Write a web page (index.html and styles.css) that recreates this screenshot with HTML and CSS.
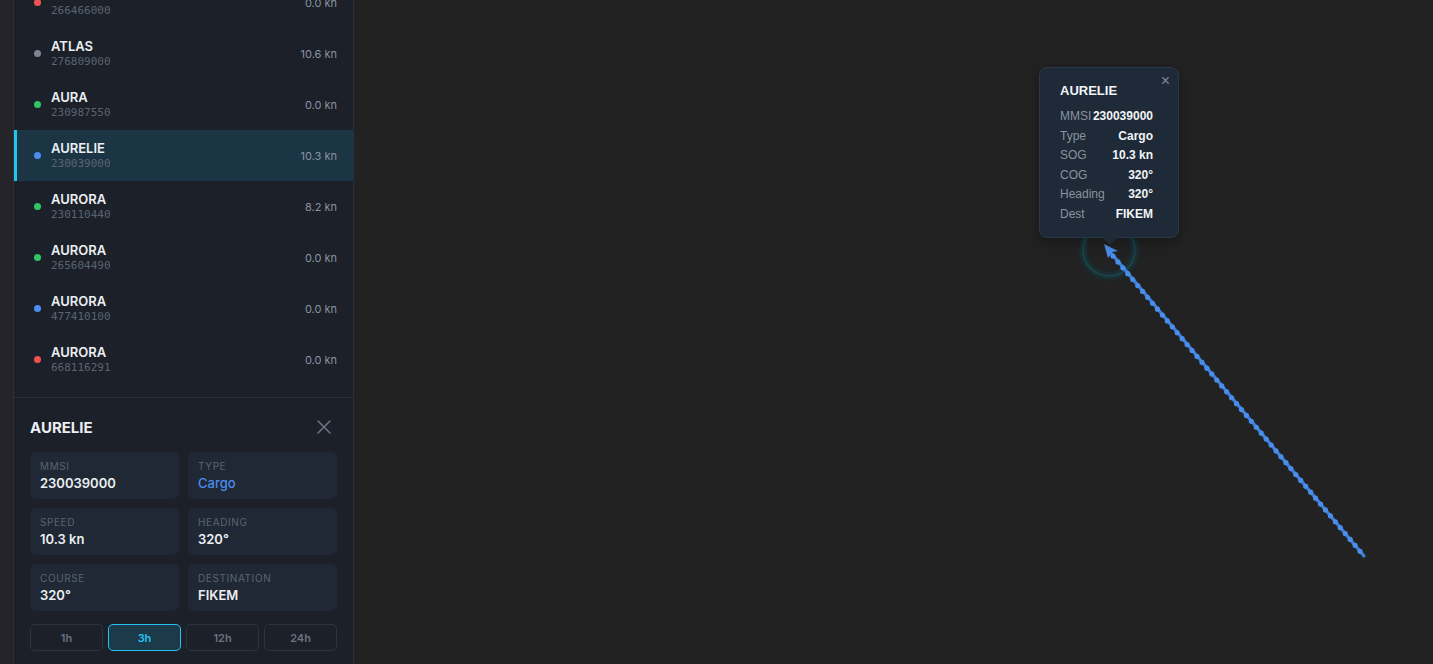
FILE: index.html
```html
<!DOCTYPE html>
<html lang="en">
<head>
  <meta charset="UTF-8">
  <title>Vessel tracker</title>
  <link rel="stylesheet" href="styles.css">
</head>
<body>
  <div class="app">
    <div class="rail"></div>

    <aside class="sidebar">
      <div class="vessel-list">
        <ul class="rows">
          <li class="row">
            <span class="dot red"></span>
            <div class="info"><div class="name">ATHENA</div><div class="mmsi">266466000</div></div>
            <span class="speed">0.0 kn</span>
          </li>
          <li class="row">
            <span class="dot grey"></span>
            <div class="info"><div class="name">ATLAS</div><div class="mmsi">276809000</div></div>
            <span class="speed">10.6 kn</span>
          </li>
          <li class="row">
            <span class="dot green"></span>
            <div class="info"><div class="name">AURA</div><div class="mmsi">230987550</div></div>
            <span class="speed">0.0 kn</span>
          </li>
          <li class="row selected">
            <span class="dot blue"></span>
            <div class="info"><div class="name">AURELIE</div><div class="mmsi">230039000</div></div>
            <span class="speed">10.3 kn</span>
          </li>
          <li class="row">
            <span class="dot green"></span>
            <div class="info"><div class="name">AURORA</div><div class="mmsi">230110440</div></div>
            <span class="speed">8.2 kn</span>
          </li>
          <li class="row">
            <span class="dot green"></span>
            <div class="info"><div class="name">AURORA</div><div class="mmsi">265604490</div></div>
            <span class="speed">0.0 kn</span>
          </li>
          <li class="row">
            <span class="dot blue"></span>
            <div class="info"><div class="name">AURORA</div><div class="mmsi">477410100</div></div>
            <span class="speed">0.0 kn</span>
          </li>
          <li class="row">
            <span class="dot red"></span>
            <div class="info"><div class="name">AURORA</div><div class="mmsi">668116291</div></div>
            <span class="speed">0.0 kn</span>
          </li>
        </ul>
      </div>

      <section class="detail">
        <div class="detail-head">
          <h3>AURELIE</h3>
          <button class="close" aria-label="Close">
            <svg width="14" height="14" viewBox="0 0 14 14"><path d="M1 1L13 13M13 1L1 13" stroke="currentColor" stroke-width="1.6" stroke-linecap="round"/></svg>
          </button>
        </div>
        <div class="cards">
          <div class="card"><div class="label">MMSI</div><div class="value">230039000</div></div>
          <div class="card"><div class="label">Type</div><div class="value type">Cargo</div></div>
          <div class="card"><div class="label">Speed</div><div class="value">10.3 kn</div></div>
          <div class="card"><div class="label">Heading</div><div class="value">320°</div></div>
          <div class="card"><div class="label">Course</div><div class="value">320°</div></div>
          <div class="card"><div class="label">Destination</div><div class="value">FIKEM</div></div>
        </div>
        <div class="ranges">
          <button>1h</button>
          <button class="active">3h</button>
          <button>12h</button>
          <button>24h</button>
        </div>
      </section>
    </aside>

    <main class="map">
      <svg class="layer" width="1079" height="664" viewBox="0 0 1079 664">
        <defs>
          <filter id="glow" x="-50%" y="-50%" width="200%" height="200%">
            <feGaussianBlur stdDeviation="2.5"/>
          </filter>
        </defs>
        <circle cx="755" cy="250" r="26" fill="none" stroke="#123c44" stroke-width="4" filter="url(#glow)"/>
        <circle cx="755" cy="250" r="26" fill="none" stroke="#17474f" stroke-width="1.5"/>
        <line x1="757" y1="253" x2="1010" y2="556" stroke="#3b7fdd" stroke-width="3.2" stroke-linecap="round"/>
        <line x1="759" y1="256" x2="1010" y2="556" stroke="#4b8eea" stroke-width="5.2" stroke-linecap="round" stroke-dasharray="0 7.7"/>
        <polygon points="750,244 764,251 758.5,252 754,258" fill="#4a8ee8"/>
      </svg>

      <div class="popup">
        <span class="popup-close">×</span>
        <h4>AURELIE</h4>
        <div class="prow"><span>MMSI</span><b>230039000</b></div>
        <div class="prow"><span>Type</span><b>Cargo</b></div>
        <div class="prow"><span>SOG</span><b>10.3 kn</b></div>
        <div class="prow"><span>COG</span><b>320°</b></div>
        <div class="prow"><span>Heading</span><b>320°</b></div>
        <div class="prow"><span>Dest</span><b>FIKEM</b></div>
      </div>
    </main>
  </div>
</body>
</html>
```

FILE: styles.css
```css
* {
  box-sizing: border-box;
}

body {
  margin: 0;
  background: #222222;
  font-family: Inter, "Noto Sans", sans-serif;
  color: #e6e9ed;
  overflow: hidden;
}

.app {
  display: flex;
  height: 664px;
}

.rail {
  width: 14px;
  background: #252429;
  border-right: 1px solid #2d3036;
}

.sidebar {
  width: 340px;
  background: #1b2029;
  border-right: 1px solid #2a3039;
  display: flex;
  flex-direction: column;
}

.vessel-list {
  height: 398px;
  overflow: hidden;
  border-bottom: 1px solid #2a3039;
}

.rows {
  list-style: none;
  margin: -23px 0 0;
  padding: 0;
}

.row {
  display: flex;
  align-items: center;
  height: 51px;
  padding: 0 16px 0 20px;
  border-left: 3px solid transparent;
}

.row.selected {
  background: #1b3545;
  border-left-color: #22c4f0;
}

.dot {
  width: 7px;
  height: 7px;
  border-radius: 50%;
  margin-left: -3px;
  margin-right: 10px;
}

.dot.red { background: #f05252; }
.dot.grey { background: #7c8591; }
.dot.green { background: #2fc765; }
.dot.blue { background: #4a8ef0; }

.info {
  flex: 1;
}

.name {
  font-size: 13px;
  font-weight: 600;
  line-height: 16px;
  color: #eceef1;
}

.mmsi {
  font-family: "DejaVu Sans Mono", monospace;
  font-size: 11px;
  line-height: 15px;
  color: #5a6471;
}

.speed {
  font-size: 11px;
  color: #8a939e;
}

.detail {
  padding: 20px 16px 0;
}

.detail-head {
  display: flex;
  justify-content: space-between;
  align-items: center;
  height: 18px;
}

.detail-head h3 {
  margin: 0;
  font-size: 15px;
  font-weight: 700;
  color: #eceef1;
}

.close {
  background: none;
  border: none;
  padding: 0;
  margin-right: 6px;
  color: #6b7480;
  display: flex;
}

.cards {
  display: grid;
  grid-template-columns: 1fr 1fr;
  gap: 9px;
  margin-top: 16px;
}

.card {
  background: #1f2834;
  border-radius: 6px;
  height: 47px;
  padding: 8px 10px;
}

.label {
  font-size: 10px;
  line-height: 12px;
  letter-spacing: 0.6px;
  text-transform: uppercase;
  color: #5a6471;
}

.value {
  margin-top: 3px;
  font-size: 13px;
  line-height: 16px;
  font-weight: 600;
  color: #eceef1;
}

.value.type {
  color: #4a8ef0;
  font-weight: 500;
}

.ranges {
  display: grid;
  grid-template-columns: repeat(4, 1fr);
  gap: 5px;
  margin-top: 13px;
}

.ranges button {
  height: 27px;
  background: #1b2029;
  border: 1px solid #2b3440;
  border-radius: 5px;
  font-family: Inter, sans-serif;
  font-size: 11px;
  font-weight: 600;
  color: #6b7480;
}

.ranges button.active {
  background: #1d3a4a;
  border-color: #22c4f0;
  color: #22c4f0;
}

.map {
  flex: 1;
  position: relative;
  background: #222222;
}

.layer {
  position: absolute;
  left: 0;
  top: 0;
}

.popup {
  position: absolute;
  left: 685px;
  top: 67px;
  width: 140px;
  height: 171px;
  background: #1e2a38;
  border: 1px solid #2b3847;
  border-radius: 8px;
  padding: 14px 25px 0 20px;
  font-family: "Liberation Sans", Arial, sans-serif;
  box-shadow: 0 4px 14px rgba(0, 0, 0, 0.35);
}

.popup::after {
  content: "";
  position: absolute;
  left: 62px;
  bottom: -8px;
  border-left: 8px solid transparent;
  border-right: 8px solid transparent;
  border-top: 8px solid #1e2a38;
}

.popup-close {
  position: absolute;
  right: 8px;
  top: 4px;
  font-size: 16px;
  color: #7d8794;
}

.popup h4 {
  margin: 0 0 8px;
  font-size: 13px;
  line-height: 17px;
  font-weight: 700;
  color: #f2f4f6;
}

.prow {
  display: flex;
  justify-content: space-between;
  font-size: 12px;
  line-height: 19.5px;
}

.prow span {
  color: #8a939e;
}

.prow b {
  color: #f2f4f6;
}
```
